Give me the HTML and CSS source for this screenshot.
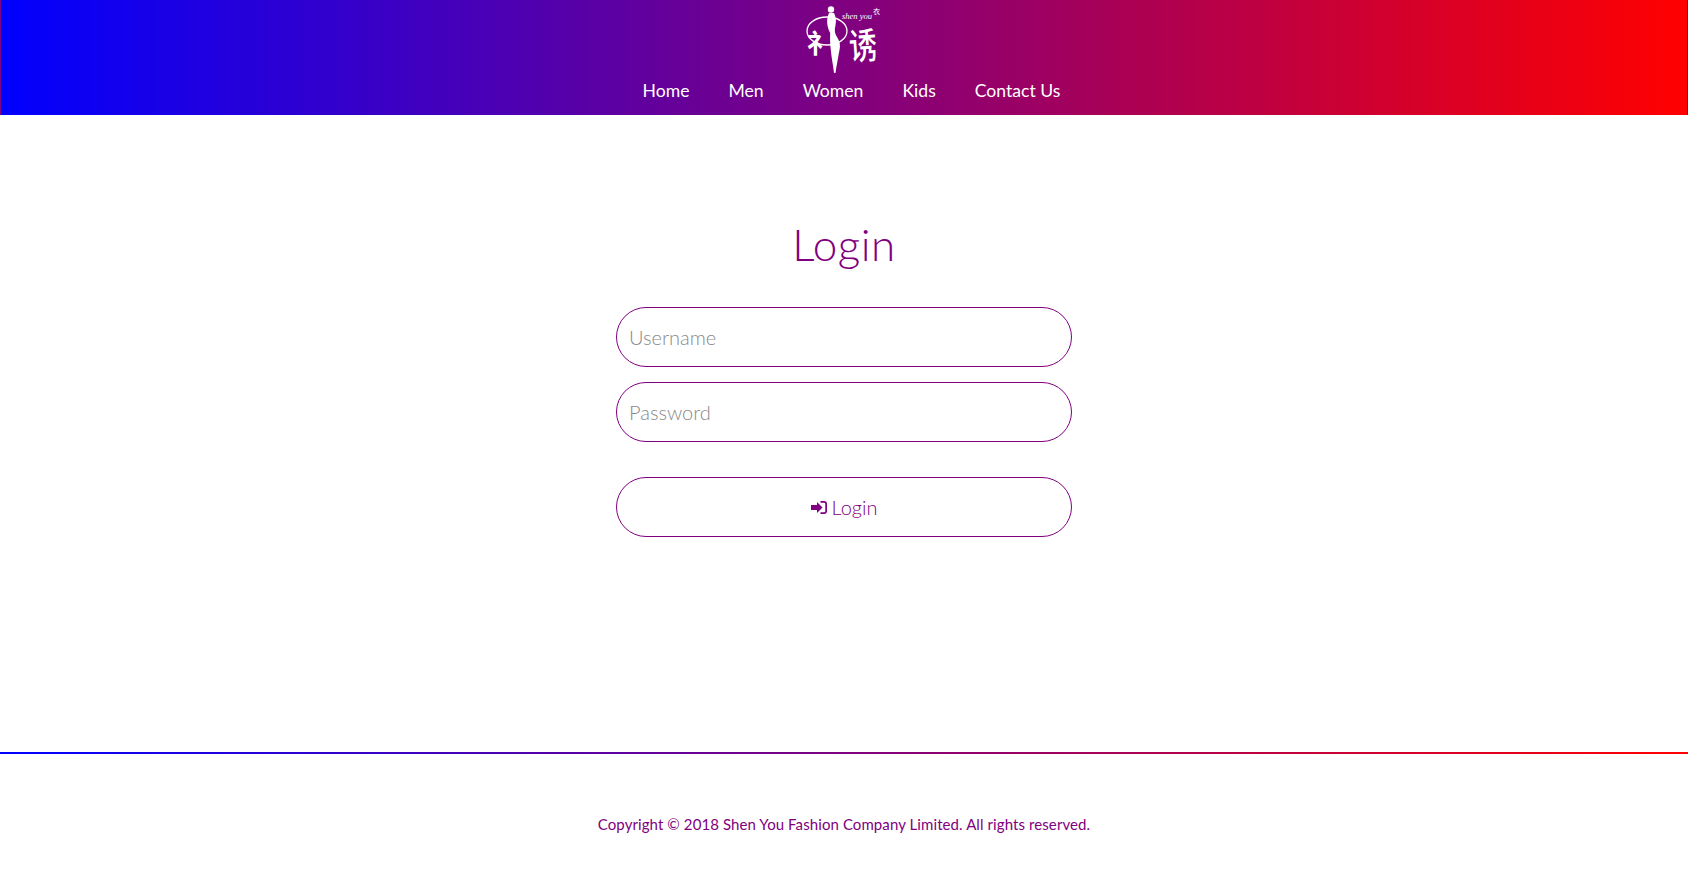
FILE: index.html
```html
<!DOCTYPE html>
<html lang="en">
<head>
<meta charset="utf-8">
<title>Login</title>
<link rel="stylesheet" href="styles.css">
</head>
<body>
<header class="site-header">
  <svg class="logo" viewBox="4 0 120 80" width="120" height="80" aria-label="Shen You logo">
    <ellipse cx="47" cy="31" rx="20" ry="14" fill="none" stroke="#fff" stroke-width="1.300"/>
    <circle cx="51" cy="9.500" r="3.200" fill="#fff"/>
    <path fill="#fff" d="M49 13 L54 13 L55 15.500 C56.500 19 56 24 55 28 C54.500 31 55 34 57 37 C60 41 60.500 46 59.500 50 C58 58 56.500 66 55.500 73 L54 73 C53 64 51.500 58 50.800 50 C50 44 50 38 50.200 33 C47.500 28 45.500 20 49 13Z"/>
    <text class="logo-side" x="27" y="53">礻</text>
    <text class="logo-en" x="62" y="19">shen you</text>
    <text class="logo-mark" x="93" y="14">衣</text>
    <text class="logo-cn" transform="translate(70 60) rotate(-4) scale(1 1.300)">诱</text>
  </svg>
  <nav class="main-nav">
    <a class="nav-link" href="#">Home</a>
    <a class="nav-link" href="#">Men</a>
    <a class="nav-link" href="#">Women</a>
    <a class="nav-link" href="#">Kids</a>
    <a class="nav-link" href="#">Contact Us</a>
  </nav>
</header>
<main class="login">
  <h1 class="login-title">Login</h1>
  <form class="login-form">
    <input class="field" type="text" placeholder="Username">
    <input class="field" type="password" placeholder="Password">
    <button class="field submit" type="button">
      <svg class="icon" viewBox="0 0 16 13" width="16" height="13" aria-hidden="true"><path d="M0 4h6V1l5.500 5.500L6 12V9H0z"/><path d="M9.500 0H13a3 3 0 0 1 3 3v7a3 3 0 0 1-3 3H9.500v-1.700H13a1.300 1.300 0 0 0 1.300-1.300V3A1.300 1.300 0 0 0 13 1.700H9.500z"/></svg>
      <span>Login</span>
    </button>
  </form>
</main>
<footer class="site-footer">
  <p class="copyright">Copyright © 2018 Shen You Fashion Company Limited. All rights reserved.</p>
</footer>
</body>
</html>
```
FILE: styles.css
```css
* { box-sizing: border-box; }
html, body { margin: 0; height: 100%; }
body {
  font-family: "Lato", "Noto Sans", sans-serif;
  color: #800080;
  background: #fff;
  overflow: hidden;
}
.site-header {
  height: 115px;
  display: flex;
  flex-direction: column;
  align-items: center;
  background: linear-gradient(to right, #00f, #f00);
  border-left: 1px solid #80008a;
  border-right: 1px solid #80008a;
}
.logo { display: block; flex: none; }
.logo-en { font: italic 8.500px "Liberation Serif", serif; fill: #fff; }
.logo-mark { font: 7px "Noto Sans CJK SC", sans-serif; fill: #fff; }
.logo-side { font: 700 26px "Noto Sans CJK SC", sans-serif; fill: #fff; }
.logo-cn { font: 500 28px "Noto Sans CJK SC", sans-serif; fill: #fff; }
.main-nav {
  display: flex;
  gap: 39px;
  padding-left: 15px;
}
.nav-link {
  color: #fff;
  text-decoration: none;
  font-size: 17.600px;
  line-height: 21px;
}
.login {
  height: 637px;
  padding-top: 102px;
  display: flex;
  flex-direction: column;
  align-items: center;
}
.login-title {
  margin: 0 0 36px;
  font-size: 44px;
  line-height: 54px;
  font-weight: 300;
  letter-spacing: 0.5px;
}
.login-form {
  width: 456px;
  display: flex;
  flex-direction: column;
  gap: 15px;
}
.field {
  width: 100%;
  height: 60px;
  border: 1px solid #800080;
  border-radius: 30px;
  padding: 0 12px;
  background: #fff;
  font-family: inherit;
  font-weight: 300;
  font-size: 20px;
  color: #800080;
  outline: none;
}
.field::placeholder { color: #888; opacity: 1; }
.submit {
  margin-top: 20px;
  display: flex;
  justify-content: center;
  align-items: center;
  gap: 5px;
}
.icon { fill: #800080; display: block; }
.site-footer {
  height: 144px;
  border-top: 2px solid;
  border-image: linear-gradient(to right, #00f, #f00) 1;
  padding-top: 60px;
}
.copyright {
  margin: 0;
  text-align: center;
  font-size: 15px;
  line-height: 20px;
  letter-spacing: 0.09px;
}
```
